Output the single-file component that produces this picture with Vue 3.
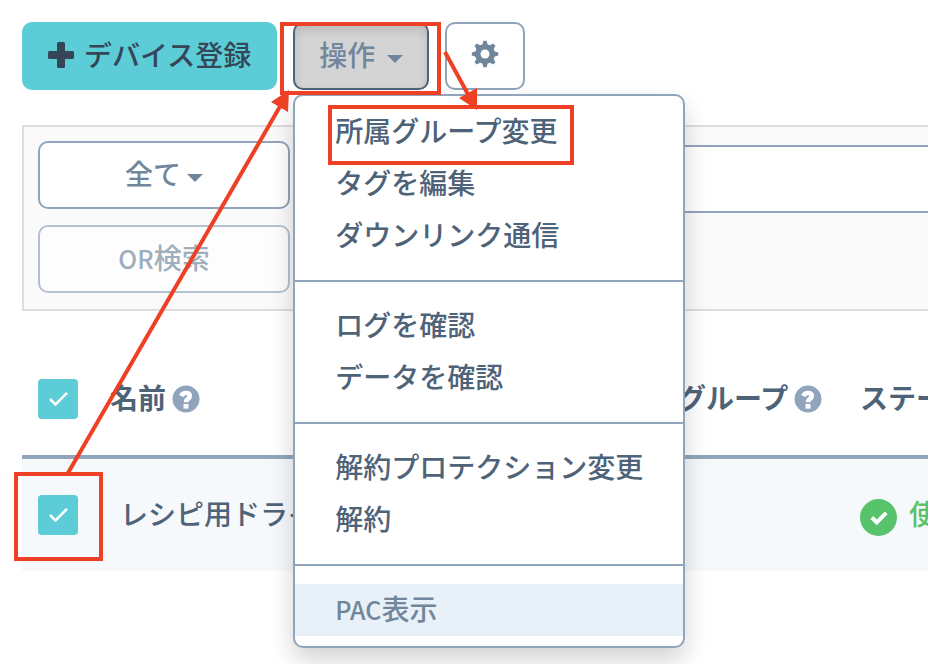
<script setup>
import { ref } from 'vue'

const groups = [
  [{ label: '所属グループ変更' }, { label: 'タグを編集' }, { label: 'ダウンリンク通信' }],
  [{ label: 'ログを確認' }, { label: 'データを確認' }],
  [{ label: '解約プロテクション変更' }, { label: '解約' }],
  [{ latin: 'PAC', label: '表示', active: true }],
]
const allChecked = ref(true)
const rowChecked = ref(true)
const keyword = ref('')
</script>

<template>
  <main class="page">
    <div class="content">
      <div class="toolbar">
        <button type="button" class="btn primary">
          <svg width="26" height="26" viewBox="0 0 26 26" aria-hidden="true">
            <path d="M10.5 0h5Q17 0 17 1.500V9h7.500Q26 9 26 10.500v5Q26 17 24.500 17H17v7.500Q17 26 15.500 26h-5Q9 26 9 24.500V17H1.500Q0 17 0 15.500v-5Q0 9 1.500 9H9V1.500Q9 0 10.500 0z" fill="currentColor" />
          </svg>
          <span>デバイス登録</span>
        </button>
        <div class="dropdown">
          <button type="button" class="btn outline open" aria-haspopup="menu" aria-expanded="true">
            <span>操作</span><span class="caret"></span>
          </button>
          <ul class="menu">
            <template v-for="(group, g) in groups" :key="g">
              <li v-if="g > 0" class="divider" role="separator"></li>
              <li v-for="item in group" :key="item.label">
                <a href="#" class="item" :class="{ active: item.active }"><span v-if="item.latin" class="latin">{{ item.latin }}</span>{{ item.label }}</a>
              </li>
            </template>
          </ul>
        </div>
        <button type="button" class="btn outline" aria-label="設定">
          <svg width="28" height="28" viewBox="0 0 28 28" aria-hidden="true">
            <g fill="currentColor">
              <path v-for="a in [0, 45, 90, 135]" :key="a" :transform="`rotate(${a} 14 14)`" d="M12.400 .8h3.200l1.400 5v16.400l-1.400 5h-3.200l-1.400-5V5.800z" />
              <circle cx="14" cy="14" r="10" />
            </g>
            <circle cx="14" cy="14" r="4.500" fill="#fff" />
          </svg>
        </button>
      </div>

      <section class="filters">
        <div class="conditions">
          <button type="button" class="btn outline tight"><span>全て</span><span class="caret"></span></button>
          <button type="button" class="btn outline" disabled><span><span class="latin">OR</span>検索</span></button>
        </div>
        <input v-model="keyword" class="keyword" type="text" aria-label="検索キーワード" />
      </section>

      <table class="devices">
        <colgroup>
          <col class="c-check" /><col class="c-name" /><col class="c-group" /><col />
        </colgroup>
        <thead>
          <tr>
            <th>
              <label class="check">
                <input v-model="allChecked" type="checkbox" aria-label="すべて選択" />
                <svg viewBox="0 0 40 40" aria-hidden="true"><path d="M12 20l5.500 5.500L29 13.800" /></svg>
              </label>
            </th>
            <th v-for="name in ['名前', '所属グループ', 'ステータス']" :key="name">
              <span class="head">
                <span class="raised">{{ name }}</span>
                <svg width="28" height="28" viewBox="0 0 28 28" aria-hidden="true">
                  <circle cx="14" cy="14" r="13.500" fill="#90a4bb" />
                  <path d="M9.200 11Q10.800 8 13.800 8q4 0 4 3 0 1.800-2 3-1.700 1-1.700 3.300" fill="none" stroke="#fff" stroke-width="4.600" />
                  <path d="M11.500 19h5v4.600h-5z" fill="#fff" />
                </svg>
              </span>
            </th>
          </tr>
        </thead>
        <tbody>
          <tr>
            <td>
              <label class="check">
                <input v-model="rowChecked" type="checkbox" aria-label="行を選択" />
                <svg viewBox="0 0 40 40" aria-hidden="true"><path d="M12 20l5.500 5.500L29 13.800" /></svg>
              </label>
            </td>
            <td><a href="#" class="name raised">レシピ用ドライ</a></td>
            <td></td>
            <td>
              <span class="status">
                <svg width="37" height="37" viewBox="0 0 36 36" aria-hidden="true">
                  <circle cx="18" cy="18" r="18" fill="#57c36b" />
                  <path d="M11.500 18l4.800 4.800 9.200-9.200" fill="none" stroke="#fff" stroke-width="3.800" />
                </svg>
                <span class="raised">使用中</span>
              </span>
            </td>
          </tr>
        </tbody>
      </table>
    </div>

    <svg class="marks" width="928" height="664" viewBox="0 0 928 664" aria-hidden="true">
      <g fill="none" stroke="#ee4025" stroke-width="4">
        <rect x="282" y="24" width="157" height="69" />
        <rect x="330" y="107" width="242" height="56" />
        <rect x="16" y="474" width="85" height="85" />
        <path d="M68 473L282 103M445 52L470 98" />
      </g>
      <path d="M289 90L271 102L288 112zM477 110L459 98L477 88z" fill="#ee4025" />
    </svg>
  </main>
</template>

<style>
body {
  background: #fff;
}
</style>

<style scoped>
.page {
  position: relative;
  overflow: hidden;
  min-height: 100vh;
  box-sizing: border-box;
  padding: 22px 0 0 22px;
  font: 500 28px/40px "Noto Sans CJK JP", sans-serif;
  color: #4e6278;
}
.content {
  min-width: 1240px;
}
.latin {
  font-size: 25px;
  line-height: 1;
}
.toolbar {
  display: flex;
  gap: 16px;
}
.btn {
  display: flex;
  align-items: center;
  justify-content: center;
  gap: 12px;
  box-sizing: border-box;
  height: 68px;
  padding: 0 24px 4px;
  border: 2px solid #90a4bb;
  border-radius: 10px;
  background: #fff;
  color: #70869b;
  font: inherit;
}
.btn.tight {
  gap: 6px;
}
.btn.primary {
  gap: 10px;
  border-color: #5ccdd7;
  background: #5ccdd7;
  color: #344658;
}
.btn.primary svg {
  margin-top: 2px;
}
.btn.open {
  border-color: #4e6278;
  background: #d4d4d4;
  box-shadow: inset 0 6px 10px rgba(0, 0, 0, 0.125);
}
.btn:disabled {
  opacity: 0.65;
}
.caret {
  margin-top: 10px;
  border: 8px solid transparent;
  border-top-color: currentColor;
  border-bottom: 0;
}
.dropdown {
  position: relative;
}
.menu {
  position: absolute;
  z-index: 2;
  top: calc(100% + 4px);
  left: 0;
  box-sizing: border-box;
  min-width: 392px;
  margin: 0;
  padding: 10px 0;
  list-style: none;
  border: 2px solid #90a4bb;
  border-radius: 10px;
  background: #fff;
  box-shadow: 0 12px 24px rgba(0, 0, 0, 0.175);
}
.item {
  display: block;
  padding: 4px 40px 8px;
  color: #4e6278;
  white-space: nowrap;
  text-decoration: none;
}
.item.active {
  background: #e8f0f8;
  color: #70869b;
}
.divider {
  height: 2px;
  margin: 18px 0;
  background: #90a4bb;
}
.filters {
  display: flex;
  align-items: flex-start;
  gap: 16px;
  margin-top: 35px;
  padding: 14px 14px 16px;
  border: 2px solid #ddd;
  background: #fafafa;
}
.conditions {
  display: grid;
  gap: 16px;
  flex: 0 0 252px;
}
.keyword {
  flex: 1;
  box-sizing: border-box;
  height: 68px;
  margin-top: 4px;
  padding: 0 24px;
  border: 2px solid #90a4bb;
  border-radius: 10px;
  background: #fff;
  color: inherit;
  font: inherit;
}
.devices {
  width: 100%;
  margin-top: 32px;
  table-layout: fixed;
  border-spacing: 0;
  text-align: left;
}
.c-check {
  width: 72px;
}
.c-name {
  width: 512px;
}
.c-group {
  width: 238px;
}
.devices th,
.devices td {
  height: 112px;
  padding: 0 0 0 16px;
  white-space: nowrap;
}
.devices th {
  border-bottom: 4px solid #90a4bb;
  font-weight: 700;
}
.devices td {
  background: #f5f9fc;
}
.head {
  display: flex;
  align-items: center;
  gap: 6px;
}
.raised {
  display: block;
  padding-bottom: 4px;
}
.check {
  display: grid;
  width: 40px;
  height: 40px;
}
.check input,
.check svg {
  grid-area: 1 / 1;
  width: 40px;
  height: 40px;
  margin: 0;
}
.check input {
  appearance: none;
  border-radius: 4px;
  background: #5ccdd7;
}
.check svg {
  pointer-events: none;
  fill: none;
  stroke: #fff;
  stroke-width: 2.6;
}
.name {
  padding-left: 10px;
  color: inherit;
  text-decoration: none;
}
.status {
  display: flex;
  align-items: center;
  gap: 12px;
  color: #57c36b;
}
.status svg {
  margin-top: 4px;
}
.marks {
  position: absolute;
  z-index: 3;
  top: 0;
  left: 0;
  pointer-events: none;
}
</style>
